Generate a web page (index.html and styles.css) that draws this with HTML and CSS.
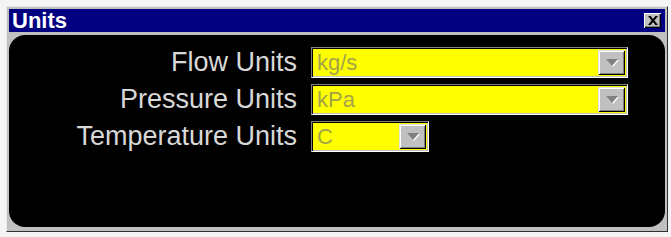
FILE: index.html
```html
<!DOCTYPE html>
<html lang="en">
<head>
    <meta charset="UTF-8">
    <meta name="viewport" content="width=device-width, initial-scale=1.0">
    <title>Units</title>
    <link rel="stylesheet" href="styles.css">
</head>
<body>
    <div class="window">
        <!-- Title Bar -->
        <div class="title-bar">
            <span class="title">Units</span>
            <div class="close-btn">
                <svg width="10" height="9" viewBox="0 0 10 9">
                    <path d="M0 0h2.6l2.4 2.9 2.4-2.9H10L6.4 4.5 10 9H7.4L5 6.1 2.6 9H0l3.6-4.5z" fill="#000"/>
                </svg>
            </div>
        </div>

        <!-- Unit Selectors -->
        <div class="panel">
            <div class="form-grid">
                <label class="unit-label">Flow Units</label>
                <div class="combo wide">
                    <span class="combo-value">kg/s</span>
                    <div class="combo-btn"><span class="arrow"></span></div>
                </div>

                <label class="unit-label">Pressure Units</label>
                <div class="combo wide">
                    <span class="combo-value">kPa</span>
                    <div class="combo-btn"><span class="arrow"></span></div>
                </div>

                <label class="unit-label">Temperature Units</label>
                <div class="combo narrow">
                    <span class="combo-value">C</span>
                    <div class="combo-btn"><span class="arrow"></span></div>
                </div>
            </div>
        </div>
    </div>
</body>
</html>
```

FILE: styles.css
```css
/* Reset */
* {
    box-sizing: border-box;
    margin: 0;
    padding: 0;
}
body {
    font-family: "Liberation Sans", Arial, sans-serif;
    background: #f4f4f4;
    width: 671px;
    height: 237px;
    overflow: hidden;
}

/* Window Frame */
.window {
    margin: 6px 3px 0 6px;
    width: 662px;
    height: 226px;
    background-color: #c0c0c0;
    border: 1px solid;
    border-color: #e8e8e8 #303030 #303030 #e8e8e8;
    padding: 2px;
}

/* Title Bar */
.title-bar {
    height: 23px;
    background-color: #000080;
    color: #fff;
    display: flex;
    align-items: center;
    justify-content: space-between;
    padding: 0 4px 0 3px;
}
.title {
    font-size: 22px;
    font-weight: bold;
    line-height: 23px;
}
.close-btn {
    width: 17px;
    height: 15px;
    background-color: #c0c0c0;
    display: flex;
    align-items: center;
    justify-content: center;
    box-shadow: inset 1px 1px 0 #fff, inset -1px -1px 0 #000, inset -2px -2px 0 #808080;
}

/* Black Panel */
.panel {
    margin-top: 3px;
    height: 192px;
    background-color: #000;
    border-radius: 16px;
    padding-top: 12px;
}
.form-grid {
    display: grid;
    grid-template-columns: 288px auto;
    column-gap: 14px;
    row-gap: 6px;
    align-items: center;
    justify-items: start;
}
.unit-label {
    justify-self: end;
    color: #d8d8d8;
    font-size: 27px;
    line-height: 31px;
}

/* Combo Boxes */
.combo {
    display: flex;
    height: 31px;
    background-color: #ffff00;
    border: 1px solid;
    border-color: #808080 #fff #fff #808080;
    box-shadow: inset 1px 1px 0 #000, inset -1px -1px 0 #c0c0c0;
    padding: 2px;
}
.combo.wide {
    width: 317px;
}
.combo.narrow {
    width: 118px;
}
.combo-value {
    flex: 1;
    color: #a3a34a;
    font-size: 22px;
    line-height: 25px;
    padding-left: 3px;
}
.combo-btn {
    width: 27px;
    background-color: #c0c0c0;
    display: flex;
    align-items: center;
    justify-content: center;
    box-shadow: inset 1px 1px 0 #dfdfdf, inset -1px -1px 0 #000, inset 2px 2px 0 #fff, inset -2px -2px 0 #808080;
}
.arrow {
    width: 0;
    height: 0;
    border-left: 6px solid transparent;
    border-right: 6px solid transparent;
    border-top: 7px solid #808080;
    filter: drop-shadow(1px 1px 0 #fff);
}
```
